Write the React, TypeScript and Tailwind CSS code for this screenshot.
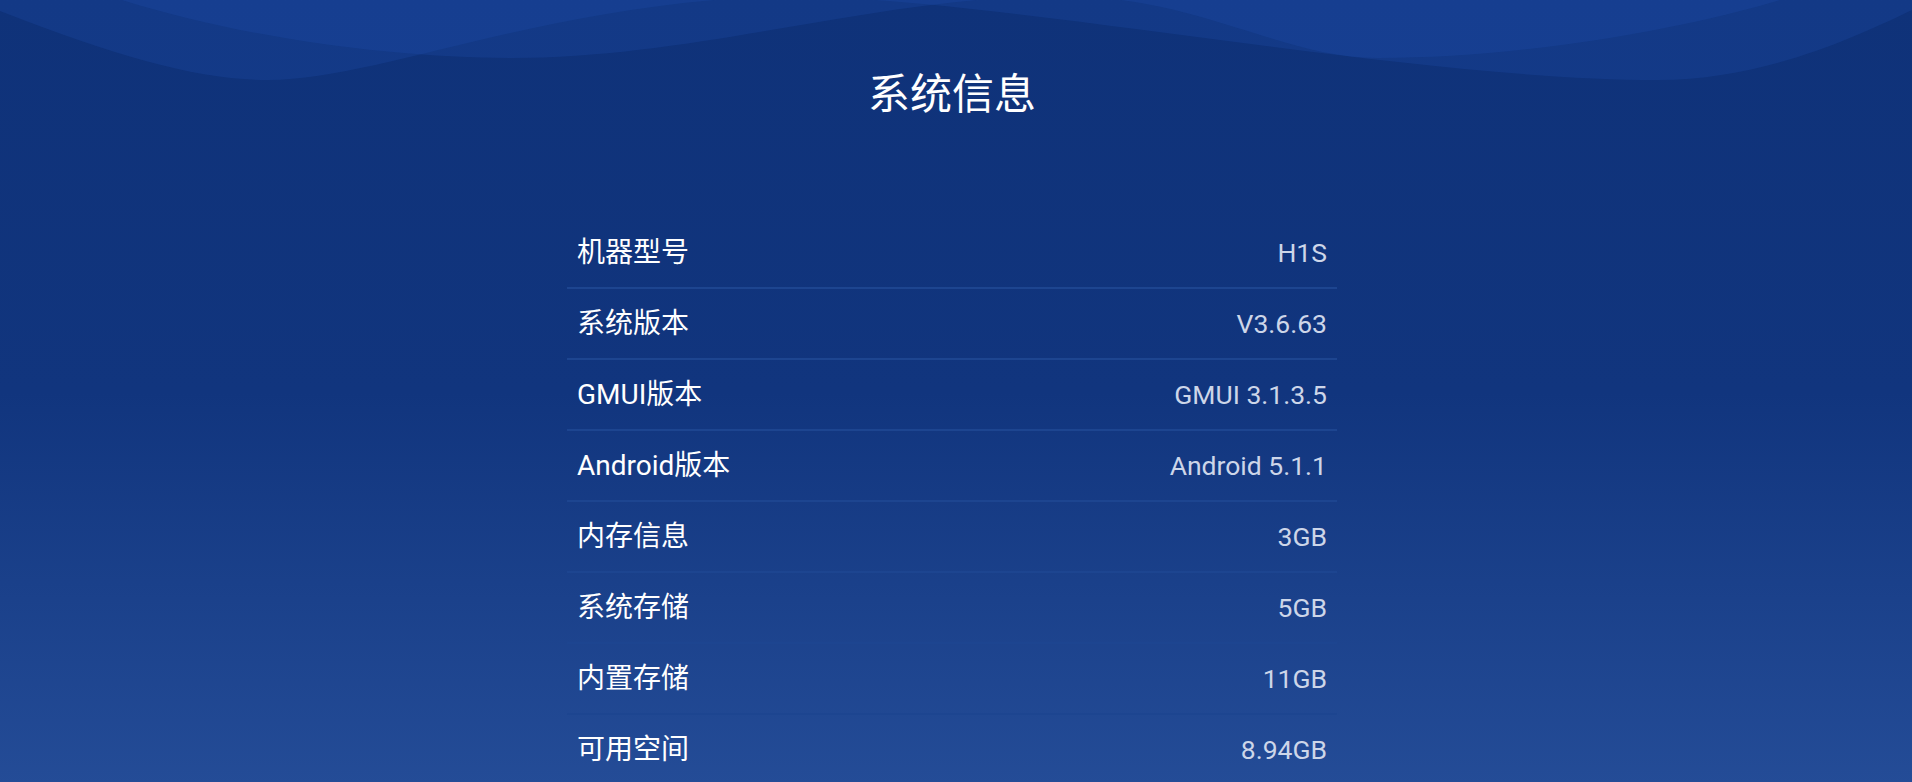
const rows = [
  { label: "机器型号", value: "H1S" },
  { label: "系统版本", value: "V3.6.63" },
  { label: "GMUI版本", value: "GMUI 3.1.3.5" },
  { label: "Android版本", value: "Android 5.1.1" },
  { label: "内存信息", value: "3GB" },
  { label: "系统存储", value: "5GB" },
  { label: "内置存储", value: "11GB" },
  { label: "可用空间", value: "8.94GB" },
]

// decorative header waves, two translucent layers
function Waves() {
  return (
    <svg className="absolute inset-x-0 top-0 h-[100px] w-full" viewBox="0 0 1912 100" preserveAspectRatio="none">
      <path
        d="M0,11 C120,58 200,80 268,80 C380,80 540,4 780,-4 C1000,-4 1400,80 1658,80 C1760,80 1850,40 1912,10 L1912,0 L0,0 Z"
        fill="#1e4fb0"
        fillOpacity="0.25"
      />
      <path
        d="M122,0 C250,40 400,58 512,58 C700,58 880,-4 1060,-4 C1200,-4 1280,58 1378,58 C1520,58 1680,30 1780,0 Z"
        fill="#1e4fb0"
        fillOpacity="0.25"
      />
    </svg>
  )
}

export default function App() {
  return (
    <div
      className="relative min-h-[782px] w-full overflow-hidden bg-gradient-to-b from-[#0f3279] via-[#11357e] to-[#244c97]"
      style={{ fontFamily: "Roboto, 'Noto Sans CJK SC', sans-serif" }}
    >
      <Waves />
      <div className="relative flex flex-col items-center pr-[8px]">
        <h1 className="mt-[74px] text-[42px] leading-[42px] font-normal text-white">系统信息</h1>
        <div className="mt-[102px] w-[770px]">
          {rows.map((row) => (
            <div
              key={row.label}
              className="flex h-[71px] items-center justify-between border-b-2 border-[#1d4590] px-[10px] pt-[1px]"
            >
              <span className="text-[28px] text-white">{row.label}</span>
              <span className="text-[26.5px] text-[#cdd6e9]">{row.value}</span>
            </div>
          ))}
        </div>
      </div>
    </div>
  )
}
